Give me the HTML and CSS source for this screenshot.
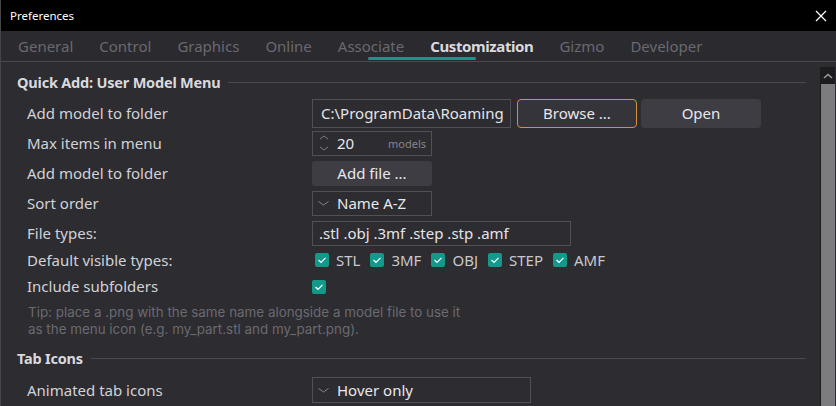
FILE: index.html
```html
<!DOCTYPE html>
<html>
<head>
<meta charset="utf-8">
<title>Preferences</title>
<link rel="stylesheet" href="styles.css">
</head>
<body>
<div class="window">
  <div class="titlebar">
    <span class="title">Preferences</span>
    <svg class="close" width="12" height="12" viewBox="0 0 12 12"><path d="M1 1L11 11M11 1L1 11" stroke="#ffffff" stroke-width="1.3" fill="none"/></svg>
  </div>
  <div class="tabbar">
    <span class="tab">General</span>
    <span class="tab">Control</span>
    <span class="tab">Graphics</span>
    <span class="tab">Online</span>
    <span class="tab">Associate</span>
    <span class="tab active">Customization</span>
    <span class="tab">Gizmo</span>
    <span class="tab">Developer</span>
    <span class="tab-indicator"></span>
  </div>
  <div class="body">
    <div class="content">
      <div class="section-head s1"><span class="section-title">Quick Add: User Model Menu</span><span class="rule"></span></div>

      <div class="row h30">
        <span class="label">Add model to folder</span>
        <div class="ctrl">
          <div class="input w199 h29">C:\ProgramData\Roaming</div>
          <div class="btn btn-focus w120 h29">Browse ...</div>
          <div class="btn w120 h29 ml4">Open</div>
        </div>
      </div>

      <div class="row h30">
        <span class="label">Max items in menu</span>
        <div class="ctrl">
          <div class="spin w120 h25">
            <svg class="spin-arrows" width="10" height="18" viewBox="0 0 10 18"><path d="M1 5L5 2L9 5M1 13L5 16L9 13" stroke="#7a7a80" stroke-width="1" fill="none"/></svg>
            <span class="spin-val">20</span>
            <span class="suffix">models</span>
          </div>
        </div>
      </div>

      <div class="row h30">
        <span class="label">Add model to folder</span>
        <div class="ctrl">
          <div class="btn w120 h25 r3">Add file ...</div>
        </div>
      </div>

      <div class="row h30">
        <span class="label">Sort order</span>
        <div class="ctrl">
          <div class="combo w120 h25">
            <svg class="caret" width="11" height="5" viewBox="0 0 11 5"><path d="M0.5 0.5L5.5 4L10.5 0.5" stroke="#85858a" stroke-width="1" fill="none"/></svg>
            <span>Name A-Z</span>
          </div>
        </div>
      </div>

      <div class="row h30">
        <span class="label">File types:</span>
        <div class="ctrl">
          <div class="input w259 h25 pl7">.stl .obj .3mf .step .stp .amf</div>
        </div>
      </div>

      <div class="row h24">
        <span class="label">Default visible types:</span>
        <div class="ctrl checks">
          <span class="check"><span class="box"><svg width="14" height="14" viewBox="0 0 14 14"><path d="M3.5 7L6 9.3L10.5 4.8" stroke="#fff" stroke-width="1.2" fill="none"/></svg></span>STL</span>
          <span class="check"><span class="box"><svg width="14" height="14" viewBox="0 0 14 14"><path d="M3.5 7L6 9.3L10.5 4.8" stroke="#fff" stroke-width="1.2" fill="none"/></svg></span>3MF</span>
          <span class="check"><span class="box"><svg width="14" height="14" viewBox="0 0 14 14"><path d="M3.5 7L6 9.3L10.5 4.8" stroke="#fff" stroke-width="1.2" fill="none"/></svg></span>OBJ</span>
          <span class="check"><span class="box"><svg width="14" height="14" viewBox="0 0 14 14"><path d="M3.5 7L6 9.3L10.5 4.8" stroke="#fff" stroke-width="1.2" fill="none"/></svg></span>STEP</span>
          <span class="check"><span class="box"><svg width="14" height="14" viewBox="0 0 14 14"><path d="M3.5 7L6 9.3L10.5 4.8" stroke="#fff" stroke-width="1.2" fill="none"/></svg></span>AMF</span>
        </div>
      </div>

      <div class="row h28">
        <span class="label">Include subfolders</span>
        <div class="ctrl">
          <span class="box solo"><svg width="14" height="14" viewBox="0 0 14 14"><path d="M3.5 7L6 9.3L10.5 4.8" stroke="#fff" stroke-width="1.2" fill="none"/></svg></span>
        </div>
      </div>

      <div class="tip">
        <span class="tip-line">Tip: place a .png with the same name alongside a model file to use it</span>
        <span class="tip-line">as the menu icon (e.g. my_part.stl and my_part.png).</span>
      </div>

      <div class="section-head s2"><span class="section-title">Tab Icons</span><span class="rule"></span></div>

      <div class="row h30">
        <span class="label">Animated tab icons</span>
        <div class="ctrl">
          <div class="combo w219 h26">
            <svg class="caret" width="11" height="5" viewBox="0 0 11 5"><path d="M0.5 0.5L5.5 4L10.5 0.5" stroke="#85858a" stroke-width="1" fill="none"/></svg>
            <span>Hover only</span>
          </div>
        </div>
      </div>
    </div>
    <div class="scrollbar">
      <div class="sb-up"><svg width="10" height="6" viewBox="0 0 10 6"><path d="M1 5L5 1.5L9 5" stroke="#9a9a9e" stroke-width="1.6" fill="none"/></svg></div>
      <div class="sb-thumb"></div>
    </div>
  </div>
</div>
</body>
</html>
```
FILE: styles.css
```css
* { box-sizing: border-box; }
html, body { margin: 0; padding: 0; }
body {
  width: 836px;
  height: 406px;
  overflow: hidden;
  background: #2d2c31;
  font-family: "Noto Sans", "Inter", sans-serif;
  font-size: 15px;
  color: #d6d6da;
}
.window {
  width: 836px;
  height: 406px;
  border-left: 1px solid #46464a;
  display: flex;
  flex-direction: column;
  background: #2d2c31;
}
.titlebar {
  height: 31px;
  flex: none;
  background: #000;
  display: flex;
  align-items: center;
  padding-left: 9px;
  padding-right: 9px;
}
.title {
  color: #fff;
  font-size: 11.5px;
  flex: 1;
}
.close { display: block; margin-top: 1px; }

.tabbar {
  position: relative;
  height: 31px;
  flex: none;
  background: #2b2a2f;
  border-bottom: 1px solid #4a494f;
  display: flex;
  align-items: center;
  gap: 26px;
  padding-left: 17px;
  padding-bottom: 1px;
}
.tab {
  color: #6a696f;
  font-size: 15px;
  white-space: nowrap;
}
.tab.active {
  color: #d9d9dd;
  font-weight: 700;
  letter-spacing: -0.4px;
}
.tab-indicator {
  position: absolute;
  left: 367px;
  width: 108px;
  bottom: 1px;
  height: 3px;
  background: #17978a;
  border-radius: 2px;
}

.body {
  flex: 1;
  display: flex;
  min-height: 0;
}
.content {
  flex: 1;
  padding-left: 16px;
  padding-top: 9px;
  padding-right: 14px;
}
.section-head {
  display: flex;
  align-items: center;
  height: 22px;
}
.section-head.s1 { margin-bottom: 5px; }
.section-head.s2 { margin-top: 9px; margin-bottom: 6px; }
.section-title {
  font-weight: 700;
  font-size: 14.5px;
  letter-spacing: -0.2px;
  color: #d9d9dd;
  white-space: nowrap;
}
.rule {
  flex: 1;
  height: 1px;
  background: #4a494f;
  margin-left: 8px;
}
.row {
  display: flex;
  align-items: center;
}
.h30 { height: 30px; }
.h24 { height: 24px; }
.h28 { height: 28px; }
.label {
  width: 295px;
  padding-left: 10px;
  flex: none;
  color: #d2d2d6;
  white-space: nowrap;
}
.ctrl {
  display: flex;
  align-items: center;
  gap: 6px;
}
.w120 { width: 120px; }
.w199 { width: 199px; }
.w219 { width: 219px; }
.w259 { width: 259px; }
.h25 { height: 25px; }
.h26 { height: 26px; }
.h29 { height: 29px; }
.ml4 { margin-left: -2px; }
.pl7 { padding-left: 6px !important; }

.input {
  border: 1px solid #505056;
  background: #2d2c31;
  color: #e4e4e8;
  display: flex;
  align-items: center;
  padding-left: 8px;
  white-space: nowrap;
  overflow: hidden;
}
.btn {
  background: #3e3d44;
  color: #e8e8ec;
  border-radius: 4px;
  display: flex;
  align-items: center;
  justify-content: center;
  white-space: nowrap;
}
.btn.r3 { border-radius: 3px; }
.btn-focus {
  background: #35343a;
  border: 1px solid #d4913f;
}
.spin {
  border: 1px solid #505056;
  display: flex;
  align-items: center;
  padding-left: 6px;
  padding-right: 5px;
}
.spin-arrows { display: block; }
.spin-val {
  margin-left: 8px;
  color: #e8e8ec;
  flex: 1;
}
.suffix {
  font-size: 11px;
  color: #85858a;
}
.combo {
  border: 1px solid #505056;
  display: flex;
  align-items: center;
  padding-left: 5px;
  color: #e8e8ec;
  gap: 8px;
}
.caret { display: block; margin-top: 1px; }
.checks { gap: 10px; padding-left: 3px; }
.check {
  display: flex;
  align-items: center;
  gap: 7px;
  color: #c8c8cc;
}
.box {
  width: 14px;
  height: 14px;
  background: #13998a;
  border-radius: 2px;
  display: inline-flex;
  flex: none;
}
.box svg { display: block; }
.solo { margin-top: 1px; }
.tip {
  margin: 4px 0 0 11px;
  color: #6a6a70;
  font-family: "Inter", "Noto Sans", sans-serif;
  font-size: 13.4px;
  display: flex;
  flex-direction: column;
}
.tip-line {
  display: block;
  height: 17px;
  line-height: 17px;
  white-space: nowrap;
}

.scrollbar {
  width: 15px;
  flex: none;
  margin-top: 5px;
  margin-right: 1px;
  display: flex;
  flex-direction: column;
}
.sb-up {
  height: 17px;
  background: #1c1c1f;
  display: flex;
  align-items: center;
  justify-content: center;
}
.sb-up svg { display: block; }
.sb-thumb {
  flex: 1;
  background: #7c7c7e;
  border-left: 1px solid #1c1c1f;
}
```
